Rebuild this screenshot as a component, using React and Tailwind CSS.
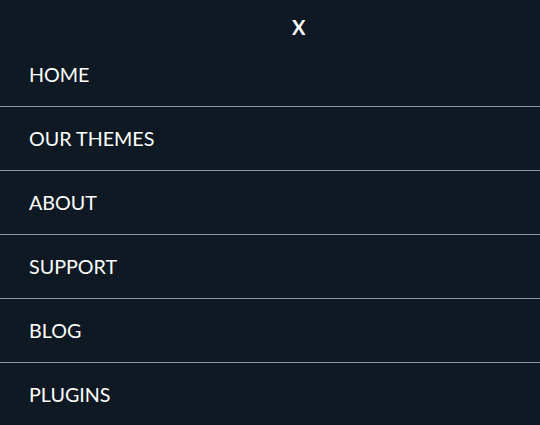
export default function App() {
  const items = ["HOME", "OUR THEMES", "ABOUT", "SUPPORT", "BLOG", "PLUGINS"];
  return (
    <div className="w-[540px] h-[425px] overflow-hidden bg-[#0e1923] text-white" style={{ fontFamily: "Lato, 'Noto Sans', sans-serif" }}>
      <div className="h-[43px] flex items-center pl-[292px] pt-[11px]">
        <span className="text-[20px] font-bold leading-none">X</span>
      </div>
      <ul>
        {items.map((it, i) => (
          <li key={it} className={`h-[64px] flex items-center pl-[29px] text-[19.7px] leading-none ${i < items.length - 1 ? "border-b border-[#8a949c]" : ""}`}>
            {it}
          </li>
        ))}
      </ul>
    </div>
  );
}
